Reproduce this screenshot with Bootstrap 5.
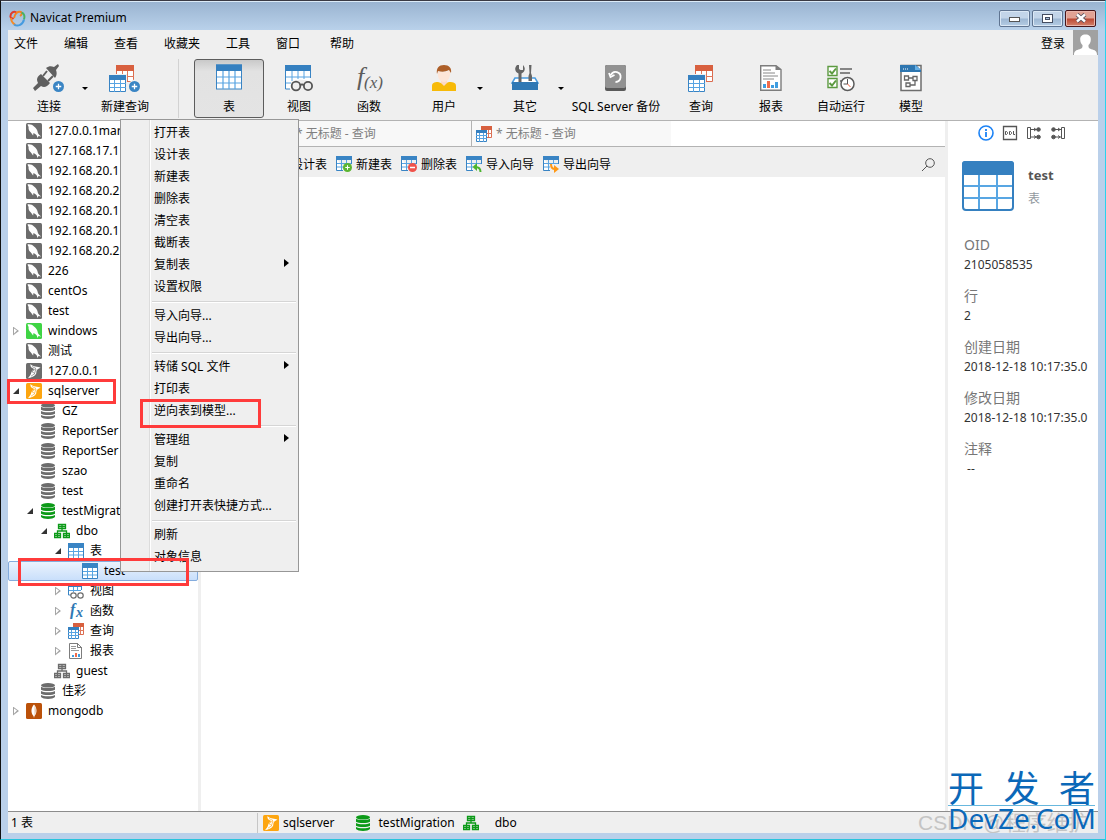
<!DOCTYPE html>
<html lang="zh-CN">
<head>
<meta charset="utf-8">
<meta name="viewport" content="width=device-width, initial-scale=1">
<title>Navicat Premium</title>
<link href="https://cdn.jsdelivr.net/npm/bootstrap@5.3.0/dist/css/bootstrap.min.css" rel="stylesheet">
<style>
body{font:12px/20px "Noto Sans","Noto Sans CJK SC",sans-serif;color:#000;background:#bad0ea;}
button{font:inherit;color:inherit;background:none;border:0;padding:0;}
a{color:inherit;text-decoration:none;}
svg{flex:none;display:block;}
.app-window{min-height:100vh;border:1px solid #111;border-top-color:#3a3a44;border-right-color:#28d3ee;border-bottom-color:#28c4dc;background:#bad0ea;padding:0 7px 6px;}
.title-strip{height:29px;margin:0 -7px;padding:4px 9px 0 8px;background:linear-gradient(#9ab4d1,#b9d1ea);border-top:1px solid #dcebf8;}
.win-btn{width:31px;height:17px;border:1px solid #5f7491;border-radius:2px;box-shadow:inset 0 0 0 1px #dbe8f5;background:linear-gradient(#c3d5e9 48%,#9db7d3 52%,#b4cce4);display:flex;align-items:center;justify-content:center;}
.win-close{border-color:#47161a;box-shadow:inset 0 0 0 1px #e9b5ab;background:linear-gradient(#e1a294 48%,#bb4732 52%,#d3836c);}
.win-set{gap:2px;}
.head-zone{background:#efefef;border-bottom:1px solid #b3b3b3;}
.menu-line{height:27px;padding-left:6px;}
.menu-line .menu-entry{margin-right:26px;}
.avatar{width:25px;height:25px;background:#a1a1a1;}
.ribbon{height:63px;padding:2px 10px 2px;}
.tool{flex:none;width:70px;height:59px;display:flex;flex-direction:column;align-items:center;border:1px solid transparent;padding-top:4px;white-space:nowrap;}
.tool svg{margin-bottom:5px;}
.tool-narrow{width:62px;}
.tool-wide{width:100px;}
.tool-gap{margin-left:9px;}
.tool-on{border-color:#5c5c5c;border-radius:3px;background:linear-gradient(#c9c9c9,#e2e2e2 20%,#e4e4e4);}
.drop-arrow{flex:none;width:10px;height:59px;display:flex;align-items:center;justify-content:center;}
.drop-arrow::after{content:"";border:3px solid transparent;border-top-color:#000;border-bottom:0;}
.rule-v{flex:none;width:1px;height:59px;background:#d2d2d2;margin:0 15px 0 18px;}
.work-zone{background:#fff;flex:1 1 auto;}
.tree-pane{width:193px;border-right:3px solid #efefef;flex:none;}
.tree-row{width:100%;height:20px;display:flex;align-items:center;text-align:left;position:relative;white-space:nowrap;}
.tree-row svg{margin-right:6px;}
.tw{width:18px;height:20px;flex:none;display:flex;align-items:center;padding-left:5px;}
.tw.shut::after{content:"";width:6px;height:9px;background:#a6a6a6;clip-path:polygon(0 0,100% 50%,0 100%,0 0,1px 2px,1px 7px,4px 4px,1px 2px);}
.tw.open::after{content:"";width:6px;height:6px;background:#333;clip-path:polygon(100% 0,100% 100%,0 100%);}
.lv1{padding-left:14px}.lv2{padding-left:28px}.lv3{padding-left:42px}.lv4{padding-left:56px}
.row-on::before{content:"";position:absolute;inset:0;border:1px solid #84acdd;border-radius:2px;background:linear-gradient(#ebf3fd,#c9dffb);}
.row-on>*{position:relative;}
.hl{position:absolute;border:3px solid #ff3b3b;pointer-events:none;z-index:1100;}
.hl-conn{inset:-2px auto -3px -1px;width:109px;}
.hl-item{inset:-2px auto -5px 18px;width:121px;}
.row-on>.hl-test{position:absolute;inset:-3px auto -5px 10px;width:171px;}
.ctx{left:112px;top:-2px;width:179px;padding:3px 1px 2px;background:linear-gradient(90deg,#efefef 28px,#dcdcdc 28px,#dcdcdc 29px,#fff 29px,#fff 30px,#efefef 30px);border:1px solid #979797;border-radius:0;font-size:12px;color:#000;--bs-dropdown-min-width:0;}
.ctx .dropdown-item{height:22px;line-height:20px;padding:0 0 0 32px;color:#000;position:relative;}
.ctx .dropdown-divider{margin:2px 1px 3px 30px;height:2px;border-top:1px solid #d5d5d5;border-bottom:1px solid #fff;opacity:1;}
.ctx .more::after{content:"";position:absolute;right:8px;top:4px;border:4px solid transparent;border-left:5px solid #000;border-right:0;}
.tab-line{height:26px;border-bottom:1px solid #b3b3b3;color:#808080;}
.tab-set{background:#f8f8f8;padding-left:70px;}
.doc-tab{width:200px;display:flex;align-items:center;gap:4px;padding-left:5px;}
.doc-tab+.doc-tab{box-shadow:inset 1px 0 #b3b3b3;}
.object-tools{height:30px;background:#efefef;padding:5px 10px 0 70px;gap:9px;}
.object-tools .act{display:flex;align-items:center;gap:4px;}
.info-pane{width:153px;border-left:3px solid #efefef;flex:none;padding:4px 7px 0 14px;color:#333;overflow:hidden;white-space:nowrap;}
.obj-head{gap:14px;}
.obj-name{font-size:13px;font-weight:700;color:#555;line-height:20px;}
.info-list dt{font-weight:400;font-size:14px;color:#777;line-height:20px;padding-left:2px;}
.info-list dd{margin:0 0 11px;padding-left:2px;line-height:20px;overflow:hidden;}
.status-line{height:22px;background:#efefef;border-top:1px solid #8c8c8c;}
.status-left{width:250px;padding-left:3px;border-right:1px solid #c6c6c6;}
.crumbs{padding-left:5px;}
.crumb{display:flex;align-items:center;margin-right:20px;}
.site-mark{position:absolute;right:10px;bottom:9px;width:147px;color:#0b68b8;z-index:1200;text-shadow:0 0 1px #fff;}
.site-mark .upper{font-size:36px;line-height:32px;border-bottom:1px solid #68b8de;}
.site-mark .lower{font-size:28px;line-height:24px;}
.blog-mark{font-family:"Liberation Sans","Noto Sans CJK SC",sans-serif;font-size:21px;color:#c4c4c4;line-height:21px;width:180px;overflow:hidden;white-space:nowrap;}
</style>
<script src="https://cdn.jsdelivr.net/npm/bootstrap@5.3.0/dist/js/bootstrap.bundle.min.js"></script>
</head>
<body>
<svg width="0" height="0" class="position-absolute" aria-hidden="true">
<defs>
<symbol id="i-mysql" viewBox="0 0 16 16"><rect width="16" height="16" rx="1.5" fill="currentColor"/><path d="M1.500 1.500C4 1 6.500 2 8 3.500c2.200 1.500 3.500 3.500 3.800 6 .3 1.500 1.500 2.500 3.400 4l-2.600-.4-1.200 1.900c-.2-2.200-1-3.500-2.600-4.200L7.500 10l-.4 2.500-2.200-3C3 8 2.300 6 2.600 4Z" fill="#fff"/></symbol>
<symbol id="i-mssql" viewBox="0 0 16 16"><rect width="16" height="16" rx="1.500" fill="currentColor"/><path d="M4.500 1c1 1.700 3.500 2 5 2.500 2 .5 3.700.5 5 1.200-2.500.8-3.500 1.800-4 3.300l-.3 2.500c-1 2.500-4.200 4-8.200 4.700 1.500-2 3-3.500 3.300-5.700.3-1.500 2.300-2.800 3-3.500C6.500 5.200 4 4.500 4.500 1Z" fill="#fff"/><path d="M6 3.500l4 2-4 3.300 3 1.700-4 2.700M8.500 10.500 10 6" fill="none" stroke="currentColor" stroke-width=".6"/></symbol>
<symbol id="i-db" viewBox="0 0 16 16"><g fill="currentColor"><ellipse cx="8" cy="2.300" rx="7" ry="2.300"/><path d="M1 3.700c2 1.700 12 1.700 14 0v3c-2 1.800-12 1.800-14 0ZM1 8c2 1.700 12 1.700 14 0v2.700c-2 1.800-12 1.800-14 0ZM1 12c2 1.700 12 1.700 14 0v2c-2 2.600-12 2.600-14 0Z"/></g></symbol>
<symbol id="i-schema" viewBox="0 0 16 16"><g fill="none" stroke="currentColor" stroke-width="1.300"><path d="M4.500 1.500h7v4h-7ZM4.500 3.500h7M8 1.500v6.500M3.500 10V8h9v2M.5 10.500h6v4h-6ZM.5 12.500h6M3.500 10.500v4M9.500 10.500h6v4h-6ZM9.500 12.500h6M12.500 10.500v4"/></g></symbol>
<symbol id="i-table" viewBox="0 0 26 26"><rect x=".5" y="1" width="25" height="24" fill="#fff" stroke="#3984c4"/><path d="M0 .5h26V7H0Z" fill="#3580c0"/><path d="M7 7v18M13 7v18M19 7v18M1 13h24M1 19h24" stroke="#58a4e2" stroke-width="1.200"/></symbol>
<symbol id="i-tbl16" viewBox="0 0 16 16"><path d="M.5.5h15v15H.5Z" fill="#fff" stroke="#3984c4"/><path d="M0 0h16v5H0Z" fill="#3984c4"/><path d="M5.500 5v10M10.500 5v10M1 8.500h14M1 12h14" stroke="#58a4e2"/></symbol>
<symbol id="i-query" viewBox="0 0 26 28"><path d="M7.500 1.500h17v16h-17Z" fill="#fff" stroke="#db6c50"/><path d="M7 1h18v6H7Z" fill="#d8603f"/><path d="M13.500 7v10M18.500 7v10M8 12.500h17" stroke="#df785c"/><path d="M0 10h18v18H0Z" fill="#efefef"/><path d="M.5 11.500h16v16H.5Z" fill="#fff" stroke="#3984c4"/><path d="M0 11h17v5H0Z" fill="#3580c0"/><path d="M5.500 16v12M11.500 16v12M1 19.500h16M1 23.500h16" stroke="#58a4e2"/></symbol>
<symbol id="i-qry16" viewBox="0 0 16 16"><path d="M5.500.5h10v11h-10Z" fill="#fff" stroke="#db6c50"/><path d="M5 0h11v4H5Z" fill="#d8603f"/><path d="M12.500 4v7M5 7.500h11" stroke="#df785c"/><path d="M.5 4.500h10v11H.5Z" fill="#fff" stroke="#3984c4"/><path d="M0 4h11v3H0Z" fill="#3580c0"/><path d="M3.500 7v9M7.500 7v9M0 9.500h11M0 12.500h11" stroke="#58a4e2"/></symbol>
<symbol id="i-view" viewBox="0 0 28 28"><path d="M.5 1h25v24H.5Z" fill="#fff"/><path d="M.5 4v21H5M25.500 4v10" fill="none" stroke="#3984c4"/><path d="M0 1h26v6H0Z" fill="#3580c0"/><path d="M7 7v10M13 7v8M19 7v8M1 13h24M1 19h5" stroke="#58a4e2"/><path d="M6 18q8-5 21 0v8H6Z" fill="#efefef"/><g fill="#efefef" stroke="#555" stroke-width="1.800"><circle cx="11" cy="22" r="4.300"/><circle cx="23" cy="22" r="4.100"/><path d="M15 21q2-1 4 0" fill="none"/></g></symbol>
<symbol id="i-view16" viewBox="0 0 16 16"><path d="M.5 1v11H3M13.500 1v6" fill="none" stroke="#3984c4"/><path d="M0 0h14v4H0Z" fill="#3580c0"/><path d="M5.500 4v5M9.500 4v4M1 7.500h12" stroke="#58a4e2"/><g fill="#fff" stroke="#6c6c6c" stroke-width="1.200"><circle cx="5.500" cy="12.500" r="2.700"/><circle cx="12.500" cy="12.500" r="2.700"/></g></symbol>
<symbol id="i-report" viewBox="0 0 22 28"><path d="M.7 1.700h15.300l5 4v20.600H.7Z" fill="#fff" stroke="#7d7d7d" stroke-width="1.400"/><path d="M15.500 1v5H21Z" fill="#7d7d7d"/><path d="M3 6h8M3 9h12M3 12h15M3 15h11" stroke="#888"/><path d="M3 20h3v4H3ZM15 18h3v6h-3ZM11 21h3v3h-3Z" fill="#3f9de0"/><path d="M7 17h3v7H7Z" fill="#f16b4a"/></symbol>
<symbol id="i-rep16" viewBox="0 0 16 16"><path d="M1.500.5h8l4 4v11h-12Z" fill="#fff" stroke="#7d7d7d"/><path d="M9.500 0v4.500H14" fill="none" stroke="#7d7d7d"/><path d="M3 3.500h5M3 5.500h5M3 7.500h8" stroke="#999"/><path d="M4 12h2v2H4ZM10 11h2v3h-2Z" fill="#3f9de0"/><path d="M7 10h2v4H7Z" fill="#f16b4a"/></symbol>
<symbol id="i-plus" viewBox="0 0 12 12"><circle cx="6" cy="6" r="6" fill="currentColor"/><path d="M6 3v6M3 6h6" stroke="#fff" stroke-width="1.400"/></symbol>
<symbol id="i-act" viewBox="0 0 17 17"><path d="M.5 1v13.500H7M15.500 1v7" fill="#fff" stroke="#3984c4"/><path d="M0 0h16v4H0Z" fill="#3984c4"/><path d="M5.500 4v10M10.500 4v5M1 7.500h14M1 11h7" stroke="#58a4e2"/></symbol>
</defs>
</svg>

<div class="app-window d-flex flex-column position-relative">
  <header class="title-strip d-flex align-items-center">
    <svg width="17" height="17" viewBox="0 0 17 17" fill="none" stroke-width="2"><path d="M8 3C5 0 1 3 1.500 7c.5 1.500 2 2 3 1" stroke="#e23b2c"/><path d="M2 8c0 4 2 5.500 4.500 7" stroke="#f38b27"/><path d="M5 8C6 3 9 1 12 2c1.500 1 .5 3-1 4" stroke="#f58220"/><path d="M12.500 2.500c3 1 3.500 4 2.500 7" stroke="#48b264"/><path d="M5 14.500c4 2.500 9 0 10-5" stroke="#459be0"/></svg>
    <span class="ms-1">Navicat Premium</span>
    <div class="win-set d-flex ms-auto">
      <button class="win-btn" aria-label="最小化"><svg width="11" height="8"><rect x=".5" y="3.500" width="10" height="4" fill="#fff" stroke="#555"/></svg></button>
      <button class="win-btn" aria-label="还原"><svg width="11" height="9"><rect x=".5" y=".5" width="10" height="8" fill="#fff" stroke="#444d61"/><rect x="3.500" y="3.500" width="4" height="2" fill="#a9c0dc" stroke="#444d61"/></svg></button>
      <button class="win-btn win-close" aria-label="关闭"><svg width="12" height="10"><path d="m2 1.500 8 7m0-7-8 7" stroke="#53505c" stroke-width="4.200"/><path d="m2 1.500 8 7m0-7-8 7" stroke="#fff" stroke-width="2.400"/></svg></button>
    </div>
  </header>

  <div class="head-zone">
    <nav class="menu-line d-flex align-items-center">
      <a href="#" class="menu-entry">文件</a><a href="#" class="menu-entry">编辑</a><a href="#" class="menu-entry">查看</a><a href="#" class="menu-entry">收藏夹</a><a href="#" class="menu-entry">工具</a><a href="#" class="menu-entry">窗口</a><a href="#" class="menu-entry ms-1">帮助</a>
      <a href="#" class="ms-auto me-2">登录</a>
      <svg class="avatar align-self-start" viewBox="0 0 25 25"><path d="M12.500 4.500c-3.500 0-5.500 2-5.300 5 0 3 1.300 4.500 2.300 5.500.2 3-.5 3.500-4 4.500C2 20.500 1 22 1 25h23c0-3-1-4.500-4.500-5.500s-4.200-1.500-4-4.500c1-1 2.300-2.500 2.300-5.500.2-3-1.800-5-5.300-5Z" fill="#fff"/></svg>
    </nav>
    <div class="ribbon d-flex">
      <button class="tool tool-narrow"><svg width="32" height="28" viewBox="0 0 32 28"><g fill="#5f5f5f"><path d="m0 24 5-5c-2-4-1-6 3-9l9 9c-3 4-6 5-9 3l-6 5ZM13 4c3-2 5-2 8-1l4-3 1 2-3 4c1 3 1 5-1 8Z"/><path d="m10 12 4-5M15 17l5-5" stroke="#5f5f5f" stroke-width="2"/></g><circle cx="25" cy="22" r="6.500" fill="#efefef"/><use href="#i-plus" x="20" y="17" width="11" height="11" color="#3a85c4"/></svg>连接</button>
      <button class="drop-arrow" aria-label="连接选项"></button>
      <button class="tool"><svg width="32" height="28" viewBox="0 0 32 28"><use href="#i-query" width="26" height="28"/><circle cx="26" cy="22" r="6.500" fill="#efefef"/><use href="#i-plus" x="20" y="17" width="11" height="11" color="#3a85c4"/></svg>新建查询</button>
      <div class="rule-v"></div>
      <button class="tool tool-on"><svg width="26" height="28" viewBox="0 0 26 28"><use href="#i-table" width="26" height="26"/></svg>表</button>
      <button class="tool"><svg width="28" height="28"><use href="#i-view"/></svg>视图</button>
      <button class="tool"><svg width="32" height="28" viewBox="0 0 32 28"><g fill="#5c5c5c" font-family="Liberation Serif, serif" font-style="italic"><text x="4" y="21" font-size="26">f</text><text x="11" y="24" font-size="17">(x)</text></g></svg>函数</button>
      <button class="tool tool-narrow tool-gap"><svg width="26" height="28" viewBox="0 0 26 28"><path d="M1 27v-5c0-3 2-4 6-4l6 2 5-2c5 0 7 1 7 4v5Z" fill="#f7ba08"/><path d="M10 15h6v4l-3 3-3-3Z" fill="#fbd9c6"/><path d="M7 7q6 3 12-1c1 7-2 12-6 12S6 14 7 7Z" fill="#fde5d7"/><path d="M6 10C5 4 8 1 13 1s8 3 7 8l-2-3c-4 2-7 2-11 1Z" fill="#ad5f28"/></svg>用户</button>
      <button class="drop-arrow" aria-label="用户选项"></button>
      <button class="tool tool-narrow tool-gap"><svg width="28" height="28" viewBox="0 0 28 28"><path d="m4 14-3 5h26l-3-5Z" fill="#fff" stroke="#4a9ce0" stroke-width="1.500"/><path d="M6 1C3 4 4 8 7.500 9.500V18h3V9.500C14 8 15 4 12 1v5h-2.500L8 5V1ZM18 1h2.500l-.5 8 1 3v5h-3.500v-5l1-3Z" fill="#656565"/><path d="M1 18h26v8H1Z" fill="#2f78b4"/></svg>其它</button>
      <button class="drop-arrow" aria-label="其它选项"></button>
      <button class="tool tool-wide"><svg width="22" height="28" viewBox="0 0 22 28"><rect y="1" width="21" height="26" rx="2" fill="#5a5a5a"/><rect y="1" width="21" height="23" rx="2" fill="#929292"/><path d="M6 11a5 5 0 1 1 4.500 7M4 9l1.500 4 4-2" fill="none" stroke="#fff" stroke-width="1.800"/></svg>SQL Server 备份</button>
      <button class="tool"><svg width="26" height="28"><use href="#i-query"/></svg>查询</button>
      <button class="tool"><svg width="22" height="28"><use href="#i-report"/></svg>报表</button>
      <button class="tool"><svg width="28" height="28" viewBox="0 0 28 28"><g fill="#fff" stroke="#5c9a40" stroke-width="1.400"><path d="M1 2.500h9v9H1ZM1 14.500h9v9H1Z"/><path d="m2.500 7 2.500 2.500L9 4.500M2.500 19l2.500 2.500 4-5" fill="none" stroke-width="2"/></g><path d="M13 5h12M13 9h10M13 17h4" stroke="#858585" stroke-width="1.800"/><circle cx="20.500" cy="20" r="6.500" fill="#fff" stroke="#5c5c5c" stroke-width="1.500"/><path d="M20.500 15v5h-4" stroke="#555" fill="none"/><path d="m20.500 20 3 3" stroke="#f06040"/></svg>自动运行</button>
      <button class="tool"><svg width="22" height="28" viewBox="0 0 22 28"><path d="M1 1.500h20v25H1Z" fill="#fff" stroke="#6d6d6d" stroke-width="1.500"/><path d="M0 1h16l5 5v2H0Z" fill="#2e76b0"/><path d="M15 1v5h6Z" fill="#66b0e6"/><path d="M3 5h1M5 5h1M7 5h1" stroke="#fff"/><g fill="none" stroke="#666" stroke-width="1.300"><path d="M4.500 12h4v4h-4ZM13 12.500h4v4h-4ZM6 19h4v3.500H6ZM9 14h4M10 21h5v-4"/></g></svg>模型</button>
    </div>
  </div>

  <main class="work-zone d-flex position-relative">
    <aside class="tree-pane">
      <button class="tree-row"><span class="tw"></span><svg width="16" height="16" color="#6c6c6c"><use href="#i-mysql"/></svg><span>127.0.0.1mar</span></button>
      <button class="tree-row"><span class="tw"></span><svg width="16" height="16" color="#6c6c6c"><use href="#i-mysql"/></svg><span>127.168.17.1</span></button>
      <button class="tree-row"><span class="tw"></span><svg width="16" height="16" color="#6c6c6c"><use href="#i-mysql"/></svg><span>192.168.20.1</span></button>
      <button class="tree-row"><span class="tw"></span><svg width="16" height="16" color="#6c6c6c"><use href="#i-mysql"/></svg><span>192.168.20.2</span></button>
      <button class="tree-row"><span class="tw"></span><svg width="16" height="16" color="#6c6c6c"><use href="#i-mysql"/></svg><span>192.168.20.1</span></button>
      <button class="tree-row"><span class="tw"></span><svg width="16" height="16" color="#6c6c6c"><use href="#i-mysql"/></svg><span>192.168.20.1</span></button>
      <button class="tree-row"><span class="tw"></span><svg width="16" height="16" color="#6c6c6c"><use href="#i-mysql"/></svg><span>192.168.20.2</span></button>
      <button class="tree-row"><span class="tw"></span><svg width="16" height="16" color="#6c6c6c"><use href="#i-mysql"/></svg><span>226</span></button>
      <button class="tree-row"><span class="tw"></span><svg width="16" height="16" color="#6c6c6c"><use href="#i-mysql"/></svg><span>centOs</span></button>
      <button class="tree-row"><span class="tw"></span><svg width="16" height="16" color="#6c6c6c"><use href="#i-mysql"/></svg><span>test</span></button>
      <button class="tree-row"><span class="tw shut"></span><svg width="16" height="16" color="#3fd444"><use href="#i-mysql"/></svg><span>windows</span></button>
      <button class="tree-row"><span class="tw"></span><svg width="16" height="16" color="#6c6c6c"><use href="#i-mysql"/></svg><span>测试</span></button>
      <button class="tree-row"><span class="tw"></span><svg width="16" height="16" color="#6c6c6c"><use href="#i-mssql"/></svg><span>127.0.0.1</span></button>
      <button class="tree-row"><span class="tw open"></span><svg width="16" height="16" color="#fda50f"><use href="#i-mssql"/></svg><span>sqlserver</span><span class="hl hl-conn"></span></button>
      <button class="tree-row lv1"><span class="tw"></span><svg width="16" height="16" color="#6c6c6c"><use href="#i-db"/></svg><span>GZ</span></button>
      <button class="tree-row lv1"><span class="tw"></span><svg width="16" height="16" color="#6c6c6c"><use href="#i-db"/></svg><span>ReportSer</span></button>
      <button class="tree-row lv1"><span class="tw"></span><svg width="16" height="16" color="#6c6c6c"><use href="#i-db"/></svg><span>ReportSer</span></button>
      <button class="tree-row lv1"><span class="tw"></span><svg width="16" height="16" color="#6c6c6c"><use href="#i-db"/></svg><span>szao</span></button>
      <button class="tree-row lv1"><span class="tw"></span><svg width="16" height="16" color="#6c6c6c"><use href="#i-db"/></svg><span>test</span></button>
      <button class="tree-row lv1"><span class="tw open"></span><svg width="16" height="16" color="#0c9a18"><use href="#i-db"/></svg><span>testMigrat</span></button>
      <button class="tree-row lv2"><span class="tw open"></span><svg width="16" height="16" color="#0c9a18"><use href="#i-schema"/></svg><span>dbo</span></button>
      <button class="tree-row lv3"><span class="tw open"></span><svg width="16" height="16"><use href="#i-tbl16"/></svg><span>表</span></button>
      <button class="tree-row lv4 row-on"><span class="tw"></span><svg width="16" height="16"><use href="#i-tbl16"/></svg><span>test</span><span class="hl hl-test"></span></button>
      <button class="tree-row lv3"><span class="tw shut"></span><svg width="16" height="16"><use href="#i-view16"/></svg><span>视图</span></button>
      <button class="tree-row lv3"><span class="tw shut"></span><svg width="16" height="18" viewBox="0 0 16 18"><g fill="#2f78b4" font-family="Liberation Serif, serif" font-style="italic" font-weight="700"><text x="2" y="13" font-size="16">f</text><text x="8" y="15" font-size="14">x</text></g></svg><span>函数</span></button>
      <button class="tree-row lv3"><span class="tw shut"></span><svg width="16" height="16"><use href="#i-qry16"/></svg><span>查询</span></button>
      <button class="tree-row lv3"><span class="tw shut"></span><svg width="16" height="16"><use href="#i-rep16"/></svg><span>报表</span></button>
      <button class="tree-row lv2"><span class="tw"></span><svg width="16" height="16" color="#6c6c6c"><use href="#i-schema"/></svg><span>guest</span></button>
      <button class="tree-row lv1"><span class="tw"></span><svg width="16" height="16" color="#6c6c6c"><use href="#i-db"/></svg><span>佳彩</span></button>
      <button class="tree-row"><span class="tw shut"></span><svg width="16" height="16" viewBox="0 0 16 16"><rect width="16" height="16" rx="1.500" fill="#bb5109"/><path d="M8 1.500C5 4.500 4.500 10 7.500 13l.5 2 .5-2c3-3 2.500-8.500-.5-11.500Z" fill="#fff"/><path d="M8.500 2.500c2 3 2 7 0 10Z" fill="#e7c4a8"/></svg><span>mongodb</span></button>
    </aside>

    <div class="dropdown-menu show ctx">
      <a href="#" class="dropdown-item">打开表</a>
      <a href="#" class="dropdown-item">设计表</a>
      <a href="#" class="dropdown-item">新建表</a>
      <a href="#" class="dropdown-item">删除表</a>
      <a href="#" class="dropdown-item">清空表</a>
      <a href="#" class="dropdown-item">截断表</a>
      <a href="#" class="dropdown-item more">复制表</a>
      <a href="#" class="dropdown-item">设置权限</a>
      <hr class="dropdown-divider">
      <a href="#" class="dropdown-item">导入向导...</a>
      <a href="#" class="dropdown-item">导出向导...</a>
      <hr class="dropdown-divider">
      <a href="#" class="dropdown-item more">转储 SQL 文件</a>
      <a href="#" class="dropdown-item">打印表</a>
      <a href="#" class="dropdown-item">逆向表到模型...<span class="hl hl-item"></span></a>
      <hr class="dropdown-divider">
      <a href="#" class="dropdown-item more">管理组</a>
      <a href="#" class="dropdown-item">复制</a>
      <a href="#" class="dropdown-item">重命名</a>
      <a href="#" class="dropdown-item">创建打开表快捷方式...</a>
      <hr class="dropdown-divider">
      <a href="#" class="dropdown-item">刷新</a>
      <a href="#" class="dropdown-item">对象信息</a>
    </div>

    <section class="flex-grow-1">
      <div class="tab-line d-flex">
        <div class="tab-set d-flex">
          <a href="#" class="doc-tab"><svg width="16" height="16"><use href="#i-qry16"/></svg>* 无标题 - 查询</a>
          <a href="#" class="doc-tab"><svg width="16" height="16"><use href="#i-qry16"/></svg>* 无标题 - 查询</a>
        </div>
      </div>
      <div class="object-tools d-flex align-items-center">
        <button class="act"><svg width="16" height="17"><use href="#i-act"/></svg>设计表</button>
        <button class="act"><svg width="16" height="17" viewBox="0 0 16 17"><use href="#i-act" width="17" height="17"/><use href="#i-plus" x="7" y="7" width="9" height="9" color="#5cb531"/></svg>新建表</button>
        <button class="act"><svg width="16" height="17" viewBox="0 0 16 17"><use href="#i-act" width="17" height="17"/><circle cx="11.500" cy="11.500" r="4.500" fill="#f0524a"/><path d="M9 11.500h5" stroke="#fff" stroke-width="1.500"/></svg>删除表</button>
        <button class="act"><svg width="16" height="17" viewBox="0 0 16 17"><use href="#i-act" width="17" height="17"/><path d="M7 8h9v9H7Z" fill="#efefef"/><path d="M14.500 16c0-4-2-5-5-5" fill="none" stroke="#4bb52d" stroke-width="2"/><path d="m11 7-4.500 4 4.500 4Z" fill="#4bb52d"/></svg>导入向导</button>
        <button class="act"><svg width="16" height="17" viewBox="0 0 16 17"><use href="#i-act" width="17" height="17"/><path d="M7 8h9v9H7Z" fill="#efefef"/><path d="M8 8c0 3.500 1 5 4 5" fill="none" stroke="#ff9815" stroke-width="2"/><path d="m11 9 5 4-5 4Z" fill="#ff9815"/></svg>导出向导</button>
        <button class="ms-auto" aria-label="搜索"><svg width="13" height="14" viewBox="0 0 13 14" fill="none" stroke="#555"><circle cx="8" cy="5" r="4.300"/><path d="m5 8-5 5"/></svg></button>
      </div>
    </section>

    <aside class="info-pane">
      <div class="d-flex align-items-center gap-2 ps-3 mb-3">
        <button aria-label="信息"><svg width="16" height="16" viewBox="0 0 16 16"><circle cx="8" cy="8" r="7" fill="#fff" stroke="#1b82f5" stroke-width="1.600"/><path d="M8 7v5M8 4v2" stroke="#1b82f5" stroke-width="1.800"/></svg></button>
        <button aria-label="DDL"><svg width="16" height="16" viewBox="0 0 16 16" fill="none" stroke="#555"><path d="M1.500 1.500h13v13h-13Z" stroke-width="1.300"/><path d="M3.500 6.500v3h1l1-1v-1l-1-1ZM7.500 6.500v3h1l1-1v-1l-1-1ZM11.500 6v3.500H13"/></svg></button>
        <button aria-label="使用"><svg width="16" height="16" viewBox="0 0 16 16" fill="none" stroke="#555"><path d="M1.500 2.500h3v11h-3ZM5 4.500h7M5 12h7M8 3l2 1.500L8 6M8 10.500l2 1.500-2 1.500"/><circle cx="12.500" cy="4.500" r="1.800" fill="#555"/><circle cx="12.500" cy="12" r="1.800" fill="#555"/></svg></button>
        <button aria-label="被使用"><svg width="16" height="16" viewBox="0 0 16 16" fill="none" stroke="#555"><path d="M11.500 2.500h3v11h-3ZM4 4.500h7M4 12h7M8 3l2 1.500L8 6M8 10.500l2 1.500-2 1.500"/><circle cx="3.500" cy="4.500" r="1.800" fill="#555"/><circle cx="3.500" cy="12" r="1.800" fill="#555"/></svg></button>
      </div>
      <div class="obj-head d-flex mb-4 pt-1">
        <svg width="52" height="50" viewBox="0 0 52 50"><rect x="1" y="1" width="50" height="48" rx="3" fill="#fff" stroke="#3580c0" stroke-width="2"/><path d="M0 14V3q0-3 3-3h46q3 0 3 3v11Z" fill="#3580c0"/><path d="M17 14v34M35 14v34M2 25h48M2 37h48" stroke="#58a6e3" stroke-width="2"/></svg>
        <div class="pt-1"><div class="obj-name">test</div><div class="pt-1 text-secondary opacity-75">表</div></div>
      </div>
      <dl class="info-list mb-0">
        <dt>OID</dt><dd>2105058535</dd>
        <dt>行</dt><dd>2</dd>
        <dt>创建日期</dt><dd>2018-12-18 10:17:35.0</dd>
        <dt>修改日期</dt><dd>2018-12-18 10:17:35.0</dd>
        <dt>注释</dt><dd>&nbsp;--</dd>
      </dl>
    </aside>
  </main>

  <footer class="status-line d-flex align-items-center">
    <div class="status-left">1 表</div>
    <div class="crumbs d-flex align-items-center">
      <span class="crumb gap-1"><svg width="16" height="16" color="#fda50f"><use href="#i-mssql"/></svg>sqlserver</span>
      <span class="crumb gap-2 me-2"><svg width="16" height="16" color="#0c9a18"><use href="#i-db"/></svg>testMigration</span>
      <span class="crumb gap-3"><svg width="16" height="16" color="#0c9a18"><use href="#i-schema"/></svg>dbo</span>
    </div>
    <div class="blog-mark ms-auto">CSDN @程序维护</div>
  </footer>
  <div class="site-mark">
    <div class="upper d-flex justify-content-between"><span>开</span><span>发</span><span>者</span></div>
    <div class="lower">DevZe.CoM</div>
  </div>
</div>
</body>
</html>
